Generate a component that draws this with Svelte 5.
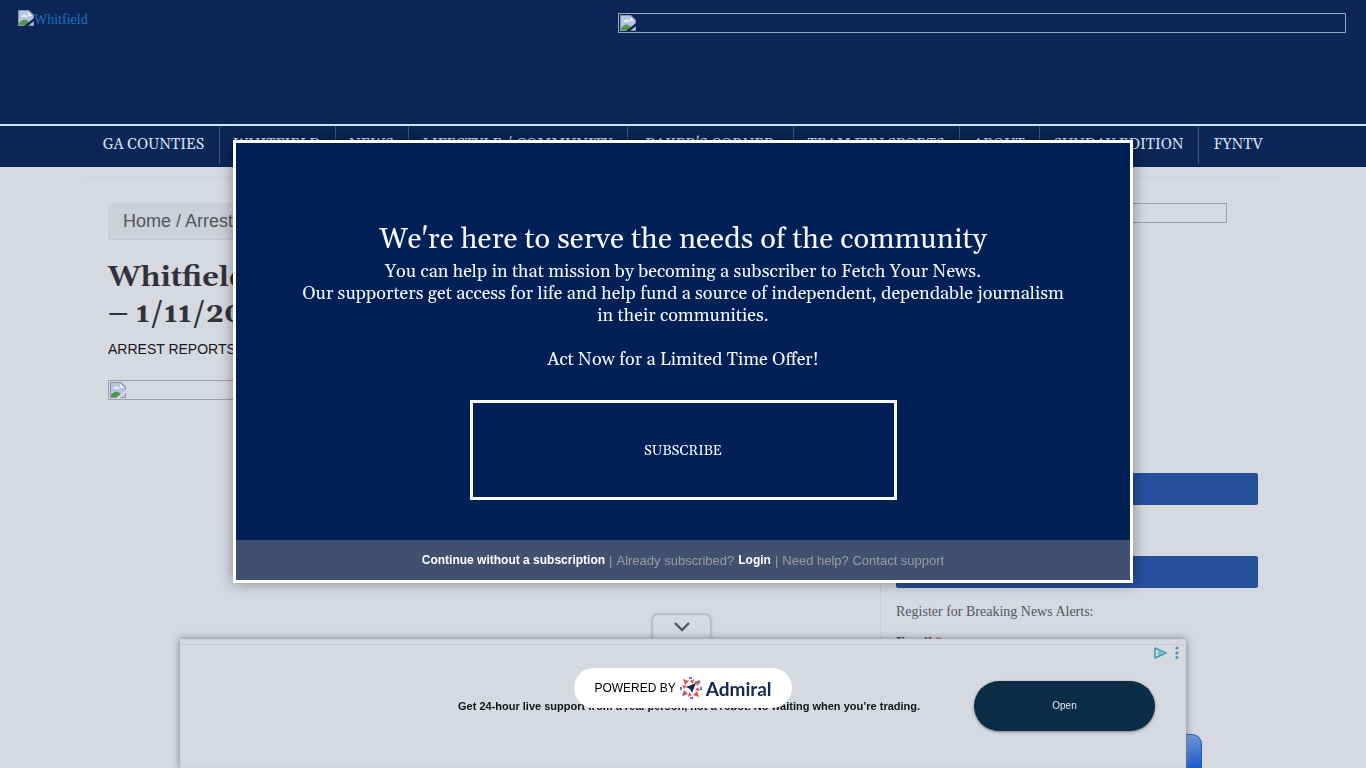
<script>
	const navItems = [
		'GA COUNTIES',
		'WHITFIELD',
		'NEWS',
		'LIFESTYLE / COMMUNITY',
		"BAKER'S CORNER",
		'TEAM FYN SPORTS',
		'ABOUT',
		'SUNDAY EDITION',
		'FYNTV'
	];

	let adOpen = $state(true);
</script>

{#snippet brokenImage()}
	<svg class="broken" viewBox="0 0 16 16" aria-hidden="true">
		<path d="M0 0h11l5 5v11H0z" fill="#8d93a0" />
		<path d="M1 1h9v5h5v9H1z" fill="#b4c4e4" />
		<path d="M10 1v5h5z" fill="#e6e9ee" />
		<path d="M3 7q0-2 2-2 1-2 3 0 2 0 2 2z" fill="#e6eaf2" />
		<path d="M1 15v-2q4-5 7-3 3 1 4 5z" fill="#4a9b45" />
		<path d="M6 16l10-8v3l-6 5z" class="tear" />
	</svg>
{/snippet}

<div class="page">
	<header class="header">
		<a class="logo" href="/">{@render brokenImage()}Whitfield</a>
		<a class="image-box banner" href="/" aria-label="Banner">{@render brokenImage()}</a>
	</header>

	<nav class="nav">
		<div class="nav-list">
			{#each navItems as item}
				<a href="/">{item}</a>
			{/each}
		</div>
	</nav>

	<div class="content">
		<main class="article">
			<div class="breadcrumb">Home / Arrest Reports</div>
			<h1>Whitfield County Arrest Reports<br />– 1/11/2021</h1>
			<p class="category">ARREST REPORTS</p>
			<div class="image-box">{@render brokenImage()}</div>
		</main>

		<aside class="sidebar">
			<div class="image-box side-image">{@render brokenImage()}</div>
			<div class="bar first"></div>
			<div class="bar"></div>
			<form>
				<p>Register for Breaking News Alerts:</p>
				<label for="email">Email <span>*</span></label>
				<input id="email" type="email" />
				<button type="button" class="signup">Sign Up</button>
			</form>
		</aside>
	</div>
</div>

<!-- Bottom ad -->
<div class="ad-layer">
	<div class="ad-wrapper">
		<button class="ad-toggle" aria-label="Toggle ad" onclick={() => (adOpen = !adOpen)}>
			<svg viewBox="0 0 16 10"><path d="M1 1l7 7 7-7" /></svg>
		</button>
		{#if adOpen}
			<div class="ad">
				<p class="ad-text">Get 24-hour live support from a real person, not a robot. No waiting when you’re trading.</p>
				<button class="ad-open">Open</button>
				<svg class="ad-choices" viewBox="0 0 26 14" aria-hidden="true">
					<path d="M1 2v10l11-5z" fill="none" stroke="#3aa3b9" stroke-width="1.6" stroke-linejoin="round" />
					<path d="M5 5v4M7 6v3" stroke="#3aa3b9" />
					<g fill="#3aa3b9">
						<circle cx="23" cy="2" r="1.6" />
						<circle cx="23" cy="7" r="1.6" />
						<circle cx="23" cy="11.5" r="1.6" />
					</g>
				</svg>
			</div>
		{/if}
	</div>
</div>

<!-- Subscription modal -->
<div class="overlay">
	<div class="modal" role="dialog" aria-labelledby="modal-title">
		<div class="modal-body">
			<h2 id="modal-title">We're here to serve the needs of the community</h2>
			<p>
				You can help in that mission by becoming a subscriber to Fetch Your News.<br />
				Our supporters get access for life and help fund a source of independent, dependable journalism
				in their communities.
			</p>
			<p class="offer">Act Now for a Limited Time Offer!</p>
			<button class="subscribe">SUBSCRIBE</button>
		</div>
		<div class="modal-footer">
			<button class="strong">Continue without a subscription</button>
			<span class="divider">|</span>
			<span>Already subscribed?</span>
			<button class="strong login">Login</button>
			<span class="divider">|</span>
			<span>Need help? <a href="/">Contact support</a></span>
		</div>
	</div>
	<a class="powered" href="/">
		POWERED BY
		<svg viewBox="0 0 22 22" aria-hidden="true">
			<g fill="#e1574c">
				<path d="M3 2l6 2-4 4z" />
				<path d="M20 3l-2 6-4-4z" />
				<path d="M19 20l-6-2 4-4z" />
				<path d="M2 19l2-6 4 4z" />
				<path d="M2 8l5 1-3 3zM14 2l-1 5-3-3zM20 14l-5-1 3-3zM8 20l1-5 3 3z" />
			</g>
			<g fill="none" stroke="#4a7fe0" stroke-width="2">
				<path d="M9 1h3M21 10v3M10 21h3M1 10v3M18 4l2 2M3 16l2 2" />
			</g>
			<path d="M16 6l-4 10-2-4-4-2z" fill="#14294f" />
		</svg>
		<span>Admiral</span>
	</a>
</div>

<style>
	:global(*, *::before, *::after) {
		box-sizing: border-box;
		margin: 0;
		padding: 0;
	}

	:global(body) {
		background: #d6d9e0;
		font-family: 'Liberation Sans', Arial, sans-serif;
		overflow: hidden;
	}

	button {
		border: none;
		background: none;
		font: inherit;
		color: inherit;
		cursor: pointer;
	}

	a {
		color: inherit;
		text-decoration: none;
	}

	.page {
		height: 100vh;
		overflow: hidden;
		font-family: Georgia, Gelasio, 'Liberation Serif', serif;
	}

	.broken {
		width: 16px;
		height: 16px;
		flex-shrink: 0;
	}

	.tear {
		fill: #d6d9e0;
	}

	.image-box {
		display: flex;
		height: 20px;
		padding: 1px;
		border: 1px solid #9c9fa8;
	}

	/* Header */
	.header {
		display: flex;
		justify-content: space-between;
		align-items: flex-start;
		height: 126px;
		padding: 10px 20px 0 18px;
		background: #0c2657;
		border-bottom: 2px solid #d6e3f5;
	}

	.header .tear {
		fill: #0c2657;
	}

	.logo {
		display: flex;
		font-family: 'Liberation Serif', serif;
		font-size: 14px;
		line-height: 20px;
		color: #1a75bd;
	}

	.banner {
		width: 728px;
		margin-top: 3px;
		border-color: #96a4bf;
	}

	/* Navigation */
	.nav {
		padding-bottom: 3px;
		background: #0c2657;
	}

	.nav-list {
		display: grid;
		grid-template-columns: 131fr 116fr 73fr 219fr 166fr 166fr 80fr 159fr 79fr;
		max-width: 1189px;
		margin: 0 auto;
	}

	.nav-list a {
		height: 38px;
		border-right: 1px solid #40557e;
		font-size: 15px;
		line-height: 38px;
		text-align: center;
		color: #d6e3f5;
		white-space: nowrap;
	}

	.nav-list a:last-child {
		border-right: none;
	}

	/* Content */
	.content {
		display: grid;
		grid-template-columns: minmax(0, 1fr) 402px;
		max-width: 1198px;
		margin: 10px auto 0;
		border-top: 1px solid #cdd0d7;
	}

	.article {
		padding: 25px 24px 0;
	}

	.breadcrumb {
		height: 37px;
		margin-bottom: 20px;
		padding: 0 15px;
		border-bottom: 1px solid #c5c8cf;
		border-radius: 3px;
		background: #cdd0d7;
		font-family: 'Liberation Sans', Arial, sans-serif;
		font-size: 18px;
		line-height: 36px;
		color: #52555c;
	}

	h1 {
		font-size: 29px;
		line-height: 36px;
		color: #303339;
	}

	.category {
		margin: 9px 0 22px;
		font-family: 'Liberation Sans', Arial, sans-serif;
		font-size: 14px;
		line-height: 17px;
		color: #16181d;
	}

	.sidebar {
		height: 640px;
		padding: 25px 24px 0 15px;
		border-left: 1px solid #cacdd4;
	}

	.side-image {
		width: 300px;
		margin: 0 auto 250px;
	}

	.bar {
		height: 32px;
		margin-bottom: 14px;
		border-radius: 2px;
		background: #264f9c;
	}

	.bar.first {
		margin-bottom: 51px;
	}

	form {
		display: flex;
		flex-direction: column;
		align-items: flex-start;
		font-family: 'Liberation Serif', serif;
		font-size: 14px;
		line-height: 20px;
		color: #555860;
	}

	label {
		margin-top: 11px;
		font-weight: bold;
		color: #303339;
	}

	label span {
		color: #c0384d;
	}

	form input {
		width: 280px;
		height: 34px;
		margin: 10px 0 37px;
		border: 1px solid #aaadb5;
	}

	.signup {
		width: 306px;
		height: 44px;
		border: 1px solid #1d59bd;
		border-radius: 10px;
		background: linear-gradient(#7098df, #1457ce 80%);
		color: #fff;
	}

	/* Ad */
	.ad-layer {
		position: fixed;
		inset: auto 0 0;
		display: flex;
		justify-content: center;
	}

	.ad-wrapper {
		display: flex;
		flex-direction: column;
		align-items: center;
		width: 1006px;
		max-width: 100%;
	}

	.ad-toggle {
		width: 59px;
		height: 25px;
		margin-right: 3px;
		border: 1px solid #b5b8bf;
		border-bottom: none;
		border-radius: 6px 6px 0 0;
		background: #d6d9e0;
		box-shadow: 0 0 3px #9a9da5;
	}

	.ad-toggle svg {
		width: 16px;
		height: 10px;
		margin-top: 3px;
		fill: none;
		stroke: #54575f;
		stroke-width: 2.4;
	}

	.ad {
		position: relative;
		display: grid;
		grid-template-columns: 1fr 181px;
		align-items: center;
		width: 100%;
		height: 129px;
		padding: 4px 30px 0 277px;
		border: 1px solid #d0d3da;
		background: linear-gradient(#d6d9e0 4px, #c8cbd2 4px, #c8cbd2 5px, #d6d9e0 5px);
		box-shadow: 0 0 8px #777a82;
	}

	.ad-text {
		font-size: 11px;
		font-weight: bold;
		line-height: 14px;
		color: #111318;
	}

	.ad-open {
		height: 50px;
		border-radius: 25px;
		background: #0c2d48;
		box-shadow: 0 1px 3px #777a82;
		font-size: 10px;
		color: #e3e8ee;
	}

	.ad-choices {
		position: absolute;
		top: 6px;
		right: 5px;
		width: 26px;
		height: 14px;
	}

	/* Modal */
	.overlay {
		position: fixed;
		inset: 0;
		display: flex;
		flex-direction: column;
		align-items: center;
		padding-top: 140px;
	}

	.modal {
		width: 900px;
		max-width: 100%;
		border: 3px solid #fff;
		background: #002056;
		box-shadow: 0 0 14px rgba(0, 0, 0, 0.4);
		color: #f4f8ff;
	}

	.modal-body {
		display: flex;
		flex-direction: column;
		align-items: center;
		padding: 80px 60px 40px;
		font-family: Georgia, Gelasio, 'Liberation Serif', serif;
		text-align: center;
	}

	h2 {
		margin-bottom: 4px;
		font-size: 29px;
		font-weight: normal;
		line-height: 34px;
	}

	.modal-body p {
		font-size: 18px;
		line-height: 22px;
	}

	.modal-body .offer {
		margin: 22px 0 29px;
	}

	.subscribe {
		width: 427px;
		max-width: 100%;
		height: 100px;
		padding-top: 2px;
		border: 3px solid #fff;
		font-size: 14px;
	}

	.modal-footer {
		display: flex;
		justify-content: center;
		align-items: center;
		height: 40px;
		background: #40506f;
		font-size: 13px;
		color: #9a9ca3;
	}

	.strong {
		font-weight: bold;
		font-size: 12px;
		color: #fff;
	}

	.login {
		margin-left: 4px;
	}

	.divider {
		margin: 0 4px;
	}

	.powered {
		display: flex;
		align-items: center;
		gap: 4px;
		height: 40px;
		margin-top: 85px;
		padding: 0 20px;
		border-radius: 20px;
		background: #fff;
		font-size: 12px;
		color: #000;
	}

	.powered svg {
		width: 22px;
		height: 22px;
	}

	.powered span {
		font-family: Lato, sans-serif;
		font-size: 19px;
		font-weight: bold;
		color: #14294f;
	}
</style>
